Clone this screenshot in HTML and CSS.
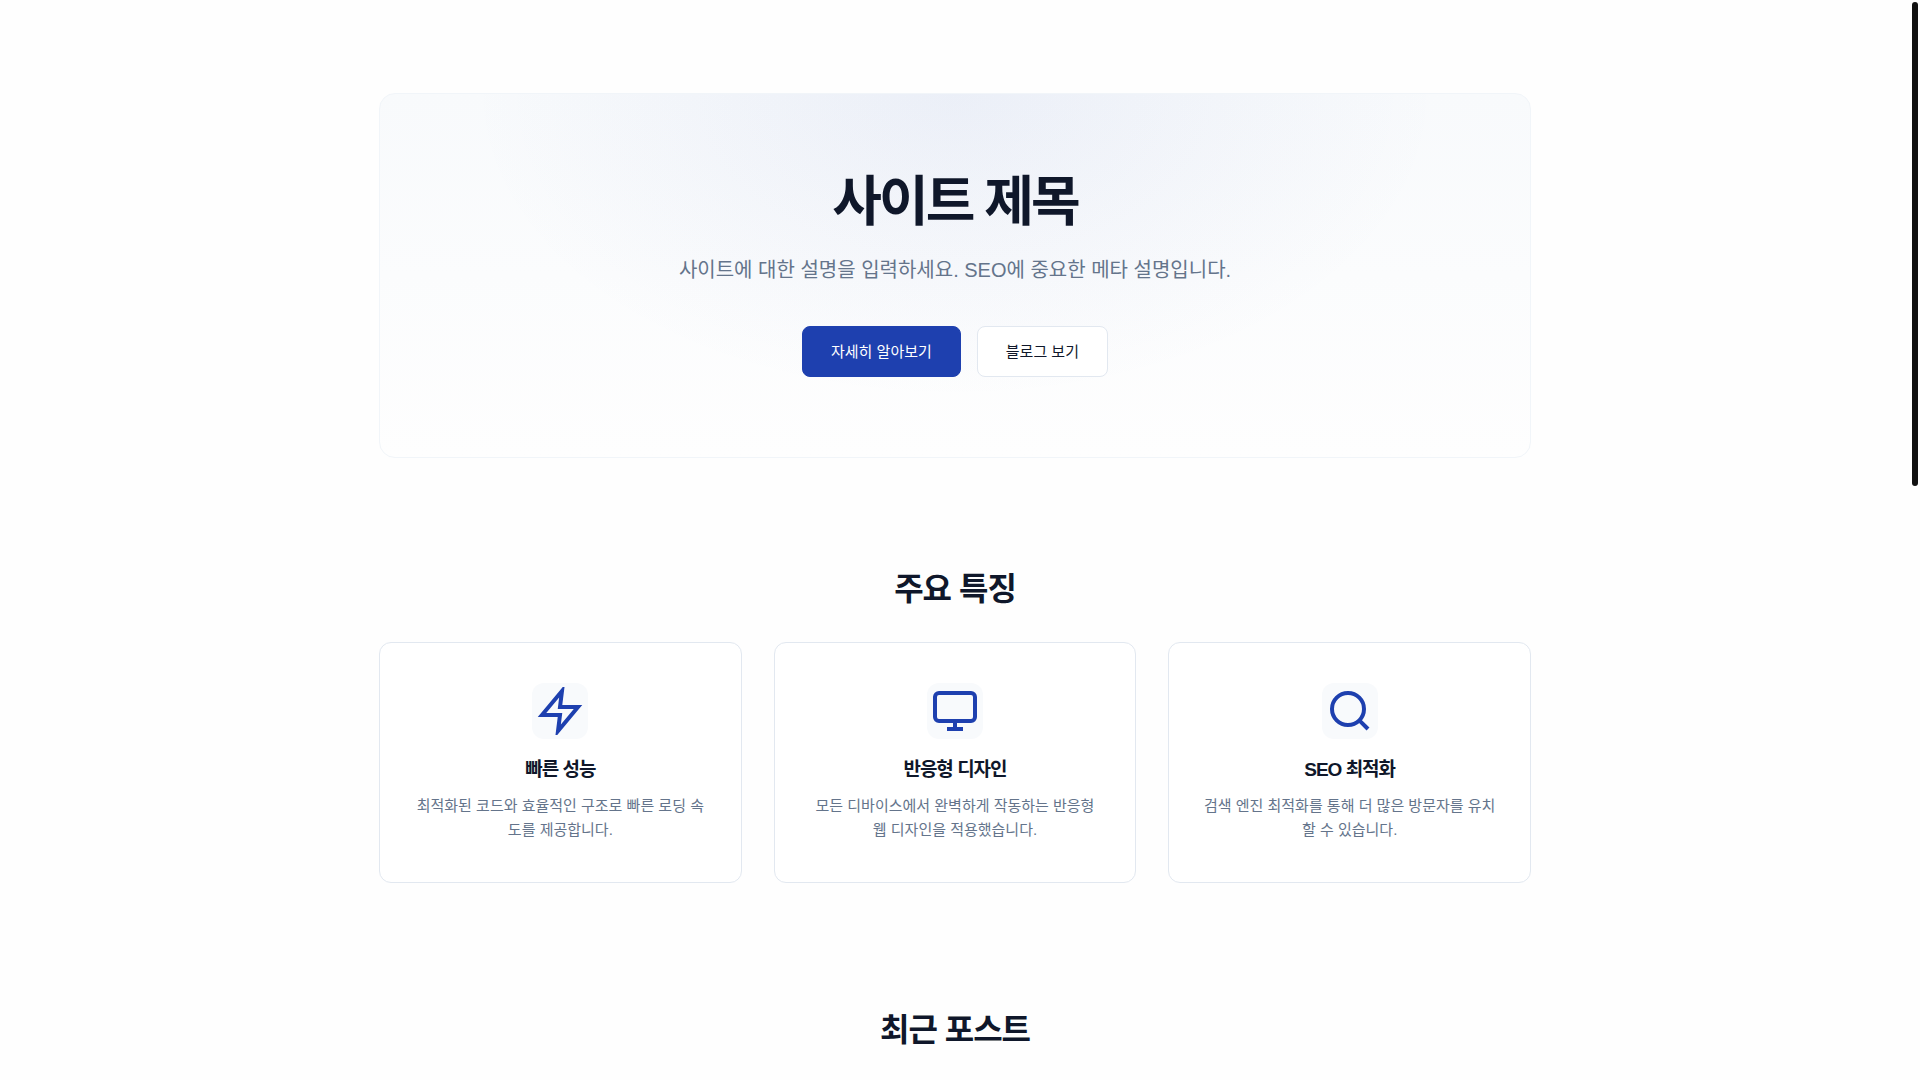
FILE: index.html
```
<!DOCTYPE html>
<html lang="ko">
<head>
  <meta charset="UTF-8">
  <meta name="viewport" content="width=device-width, initial-scale=1">
  <title>사이트 제목</title>
  <link rel="stylesheet" href="styles.css">
</head>
<body>

<main class="container">
  <section class="hero">
    <h1>사이트 제목</h1>
    <p>사이트에 대한 설명을 입력하세요. SEO에 중요한 메타 설명입니다.</p>
    <div class="hero-actions">
      <a href="#features" class="btn btn-primary">자세히 알아보기</a>
      <a href="#posts" class="btn btn-secondary">블로그 보기</a>
    </div>
  </section>

  <section class="features" id="features">
    <h2>주요 특징</h2>
    <div class="feature-grid">
      <article class="feature-card">
        <div class="feature-icon">
          <svg width="48" height="48" viewBox="0 0 24 24" fill="none" stroke="currentColor" stroke-width="2">
            <path d="M13 2L3 14h9l-1 8 10-12h-9l1-8z"/>
          </svg>
        </div>
        <h3>빠른 성능</h3>
        <p>최적화된 코드와 효율적인 구조로 빠른 로딩 속도를 제공합니다.</p>
      </article>
      <article class="feature-card">
        <div class="feature-icon">
          <svg width="48" height="48" viewBox="0 0 24 24" fill="none" stroke="currentColor" stroke-width="2">
            <rect x="2" y="3" width="20" height="14" rx="2"/>
            <path d="M8 21h8M12 17v4"/>
          </svg>
        </div>
        <h3>반응형 디자인</h3>
        <p>모든 디바이스에서 완벽하게 작동하는 반응형 웹 디자인을 적용했습니다.</p>
      </article>
      <article class="feature-card">
        <div class="feature-icon">
          <svg width="48" height="48" viewBox="0 0 24 24" fill="none" stroke="currentColor" stroke-width="2">
            <circle cx="11" cy="11" r="8"/>
            <path d="M21 21l-4.35-4.35"/>
          </svg>
        </div>
        <h3>SEO 최적화</h3>
        <p>검색 엔진 최적화를 통해 더 많은 방문자를 유치할 수 있습니다.</p>
      </article>
    </div>
  </section>

  <section class="posts" id="posts">
    <h2>최근 포스트</h2>
  </section>
</main>

<div class="scrollbar" aria-hidden="true"><div class="scrollbar-thumb"></div></div>

</body>
</html>
```
FILE: styles.css
```
:root {
  --primary: #1e40af;
  --text: #0f172a;
  --muted: #64748b;
  --border: #e2e8f0;
  --soft: #f8fafc;
  --scrollbar: 10px;
}

* { margin: 0; padding: 0; box-sizing: border-box; }

body {
  padding-right: var(--scrollbar);
  font-family: "Liberation Sans", "Noto Sans CJK KR", sans-serif;
  font-size: 16px;
  line-height: 1.6;
  color: var(--text);
  background: #fefefe;
}

/* scrollbar */
.scrollbar {
  position: fixed;
  top: 0;
  right: 0;
  bottom: 0;
  width: var(--scrollbar);
  padding: 2px;
}
.scrollbar-thumb {
  height: 45%;
  background: #111;
  border-radius: 3px;
}

.container {
  max-width: 1200px;
  margin: 0 auto;
  padding: 93px 24px 0;
}

/* hero */
.hero {
  padding: 66px 32px 80px;
  text-align: center;
  border: 1px solid #f1f5f9;
  border-radius: 16px;
  background:
    radial-gradient(ellipse at top, rgba(30, 64, 175, 0.06), transparent 60%),
    linear-gradient(180deg, var(--soft), #fefefe);
}
.hero h1 {
  font-size: 54px;
  line-height: 84px;
  letter-spacing: -3px;
  margin-bottom: 8px;
}
.hero p {
  font-size: 20px;
  line-height: 36px;
  color: var(--muted);
  margin-bottom: 38px;
}
.hero-actions {
  display: flex;
  justify-content: center;
  gap: 16px;
}

.btn {
  padding: 12px 28px;
  font-size: 15px;
  line-height: 25px;
  border: 1px solid var(--border);
  border-radius: 8px;
  text-decoration: none;
}
.btn-primary { background: var(--primary); border-color: var(--primary); color: #fff; }
.btn-secondary { background: #fff; color: var(--text); }

/* sections */
h2 {
  font-size: 32px;
  line-height: 48px;
  letter-spacing: -1px;
  text-align: center;
}
.features { margin-top: 107px; }
.features h2 { margin-bottom: 29px; }
.feature-grid {
  display: grid;
  grid-template-columns: repeat(3, 1fr);
  gap: 32px;
}
.feature-card {
  padding: 40px 32px;
  text-align: center;
  background: #fff;
  border: 1px solid var(--border);
  border-radius: 12px;
}
.feature-icon {
  display: flex;
  align-items: center;
  justify-content: center;
  width: 56px;
  height: 56px;
  margin: 0 auto 16px;
  border-radius: 12px;
  background: var(--soft);
  color: var(--primary);
}
.feature-card h3 {
  font-size: 19px;
  line-height: 29px;
  letter-spacing: -1px;
  margin-bottom: 10px;
}
.feature-card p {
  font-size: 15px;
  line-height: 24px;
  color: var(--muted);
}

.posts { margin-top: 123px; }

@media (max-width: 768px) {
  .feature-grid { grid-template-columns: 1fr; }
}
```
